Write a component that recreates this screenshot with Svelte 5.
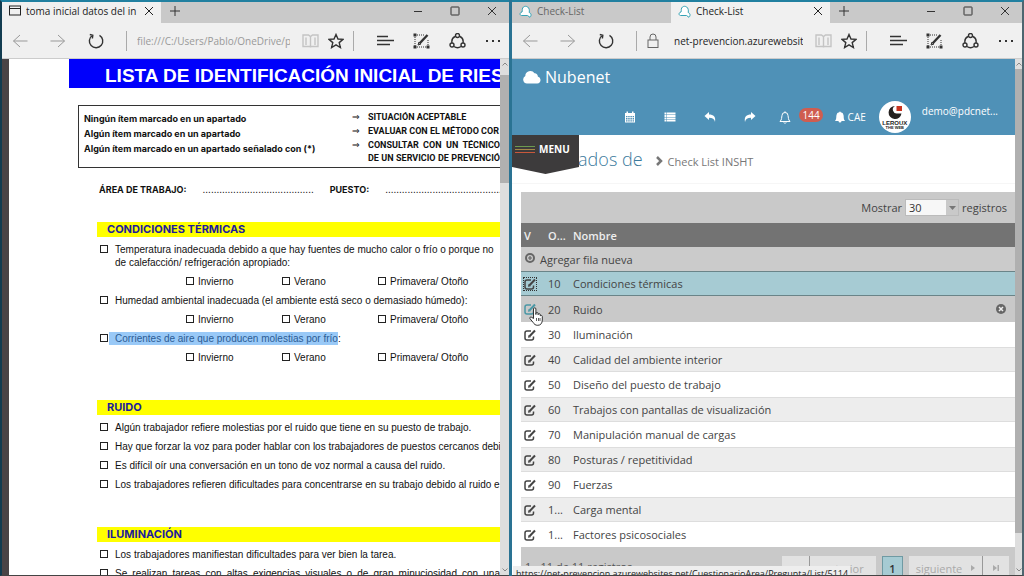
<script>
	let pageSize = $state('30');
	let selected = $state(10);

	const conditions = [
		{
			lines: [
				'Temperatura inadecuada debido a que hay fuentes de mucho calor o frío o porque no',
				'de calefacción/ refrigeración apropiado:'
			]
		},
		{ lines: ['Humedad ambiental inadecuada (el ambiente está seco o demasiado húmedo):'] },
		{ lines: ['Corrientes de aire que producen molestias por frío'], marked: true }
	];
	const seasons = ['Invierno', 'Verano', 'Primavera/ Otoño'];

	const noise = [
		'Algún trabajador refiere molestias por el ruido que tiene en su puesto de trabajo.',
		'Hay que forzar la voz para poder hablar con los trabajadores de puestos cercanos debi',
		'Es difícil oír una conversación en un tono de voz normal a causa del ruido.',
		'Los trabajadores refieren dificultades para concentrarse en su trabajo debido al ruido e'
	];

	const rows = [
		{ order: 10, name: 'Condiciones térmicas' },
		{ order: 20, name: 'Ruido', hover: true },
		{ order: 30, name: 'Iluminación' },
		{ order: 40, name: 'Calidad del ambiente interior' },
		{ order: 50, name: 'Diseño del puesto de trabajo' },
		{ order: 60, name: 'Trabajos con pantallas de visualización' },
		{ order: 70, name: 'Manipulación manual de cargas' },
		{ order: 80, name: 'Posturas / repetitividad' },
		{ order: 90, name: 'Fuerzas' },
		{ order: 100, label: '1...', name: 'Carga mental' },
		{ order: 110, label: '1...', name: 'Factores psicosociales' }
	];
</script>

{#snippet windowControls()}
	<div class="controls">
		<button aria-label="Minimizar"><svg width="10" height="10" viewBox="0 0 10 10"><path d="M1 5.5h8" /></svg></button>
		<button aria-label="Maximizar"><svg width="10" height="10" viewBox="0 0 10 10"><rect x="1" y="1" width="8" height="8" rx="0.5" /></svg></button>
		<button aria-label="Cerrar"><svg width="10" height="10" viewBox="0 0 10 10"><path d="M1 1l8 8M9 1l-8 8" /></svg></button>
	</div>
{/snippet}

{#snippet tabClose()}
	<button class="tab-close" aria-label="Cerrar pestaña"><svg width="10" height="10" viewBox="0 0 10 10"><path d="M1 1l8 8M9 1l-8 8" /></svg></button>
{/snippet}

{#snippet newTab()}
	<button class="new-tab" aria-label="Nueva pestaña"><svg width="12" height="12" viewBox="0 0 12 12"><path d="M6 1v10M1 6h10" /></svg></button>
{/snippet}

{#snippet cloudTab()}
	<svg class="tab-cloud" width="13" height="13" viewBox="0 0 13 13"><path d="M2.500 10.500h6l2.500 1.800c1.500-1.500 1.500-4-.8-4.800.3-1 .2-2.200 0-3.200C9.200.3 3.700.3 3.300 4.300c-.1 1 .2 1.800-.3 2.700-2.300.2-2.700 3.300-.5 3.500z" /></svg>
{/snippet}

{#snippet addressBar(url, secure)}
	<div class="toolbar">
		<div class="nav">
			<button class="dim" aria-label="Atrás"><svg width="16" height="16" viewBox="0 0 16 16"><path d="M8 2L1.500 8 8 14M1.500 8H15.500" /></svg></button>
			<button class="dim" aria-label="Adelante"><svg width="16" height="16" viewBox="0 0 16 16"><path d="M8 2l6.500 6L8 14M14.500 8H0.500" /></svg></button>
			<button aria-label="Actualizar"><svg width="16" height="16" viewBox="0 0 16 16"><path class="bold" d="M4.300 2.500A6.700 6.700 0 1 0 11.500 2.300M1.800 1.500l3 .7-.4 3.300" /></svg></button>
		</div>
		<span class="divider"></span>
		{#if secure}
			<svg class="lock" width="12" height="16" viewBox="0 0 12 16"><rect x="1" y="7" width="10" height="7.500" /><path d="M3 7V4a3 3 0 0 1 6 0v3" /></svg>
		{/if}
		<input class="url" class:dark={secure} type="text" aria-label="Dirección" value={url} />
		<div class="marks">
			<button class="faint" aria-label="Vista de lectura"><svg width="17" height="16" viewBox="0 0 17 16"><path class="bold" d="M1 2h5.500l2 1.500 2-1.500H16v11.500H1zM8.500 3.500v11M4 4.500v7.500M13 4.500v7.500" /></svg></button>
			<button aria-label="Favoritos"><svg width="16" height="16" viewBox="0 0 16 16"><path class="bold" d="M8 1.500l2 4.500 5 .4-3.800 3.200 1.200 4.900L8 11.900l-4.400 2.600 1.200-4.900L1 6.400 6 6z" /></svg></button>
		</div>
		<span class="divider"></span>
		<div class="actions">
			<button aria-label="Centro"><svg width="17" height="16" viewBox="0 0 17 16"><path class="bold" d="M0 3.500h11M0 7.500h17M0 11.500h13" /></svg></button>
			<button aria-label="Nota web"><svg width="17" height="16" viewBox="0 0 17 16"><path class="dots" d="M2 2h9M2 2v12M2 14h13M15 7v7" /><path d="M0.500 0.500h3v3h-3zM0.500 12.500h3v3h-3zM13.500 12.500h3v3h-3z" fill="currentColor" stroke="none" /><path class="pen" d="M6.500 10.500L14.500 2" /><path d="M5 12l1-3 2 2z" /></svg></button>
			<button aria-label="Compartir"><svg width="17" height="16" viewBox="0 0 17 16"><path class="bold" d="M6 3.500C3 5 2.500 7.500 3 10M11 3.500c3 1.500 3.500 4 3 6.500M5 13.500c2 1.500 5 1.500 7 0" /><circle class="bold" cx="8.500" cy="2.500" r="2" /><circle class="bold" cx="3" cy="12" r="2" /><circle class="bold" cx="14" cy="12" r="2" /></svg></button>
			<button aria-label="Más"><svg width="16" height="16" viewBox="0 0 16 16"><path d="M1 7h2v2H1zM7 7h2v2H7zM13 7h2v2h-2z" fill="currentColor" stroke="none" /></svg></button>
		</div>
	</div>
{/snippet}

{#snippet chevron(dir)}
	<svg class="chevron" width="8" height="6" viewBox="0 0 8 6"><path d={dir === 'up' ? 'M1.500 4.500L4 2l2.500 2.500' : 'M1.500 1.500L4 4l2.500-2.500'} /></svg>
{/snippet}

{#snippet checkItem(text)}
	<label class="item"><input type="checkbox" /><span>{text}</span></label>
{/snippet}

<div class="desktop">
	<section class="window left">
		<div class="tabs">
			<div class="tab active">
				<svg width="12" height="12" viewBox="0 0 12 12"><rect x="0.500" y="1" width="11" height="9" /><path d="M0.500 3.500h11" /></svg>
				<span>toma inicial datos del in</span>
				{@render tabClose()}
			</div>
			{@render newTab()}
			{@render windowControls()}
		</div>
		{@render addressBar('file:///C:/Users/Pablo/OneDrive/p', false)}
		<div class="viewport">
			<article class="paper">
				<h1>LISTA DE IDENTIFICACIÓN INICIAL DE RIES</h1>

				<div class="criteria">
					<div class="cases">
						<p>Ningún ítem marcado en un apartado</p>
						<p>Algún ítem marcado en un apartado</p>
						<p>Algún ítem marcado en un apartado señalado con (*)</p>
					</div>
					<ul class="results">
						<li>SITUACIÓN ACEPTABLE</li>
						<li>EVALUAR CON EL MÉTODO COR</li>
						<li class="justified">CONSULTAR CON UN TÉCNICO<br />DE UN SERVICIO DE PREVENCIÓ</li>
					</ul>
				</div>

				<div class="fields">
					<span class="area">ÁREA DE TRABAJO:</span>
					<span>........................................</span>
					<span class="area">PUESTO:</span>
					<span>..........................................</span>
				</div>

				<section class="block">
					<h2>CONDICIONES TÉRMICAS</h2>
					{#each conditions as item}
						<label class="item">
							<input type="checkbox" />
							{#if item.marked}
								<span><mark>{item.lines[0]}</mark>:</span>
							{:else}
								<span>{#each item.lines as line, i}{#if i}<br />{/if}{line}{/each}</span>
							{/if}
						</label>
						<div class="seasons">
							{#each seasons as season}
								<label><input type="checkbox" />{season}</label>
							{/each}
						</div>
					{/each}
				</section>

				<section class="block">
					<h2>RUIDO</h2>
					{#each noise as text}
						{@render checkItem(text)}
					{/each}
				</section>

				<section class="block">
					<h2>ILUMINACIÓN</h2>
					{@render checkItem('Los trabajadores manifiestan dificultades para ver bien la tarea.')}
					<div class="justified">
						{@render checkItem('Se realizan tareas con altas exigencias visuales o de gran minuciosidad con una')}
					</div>
				</section>
			</article>
			<div class="scrollbar">
				{@render chevron('up')}
				<span class="thumb"></span>
				{@render chevron('down')}
			</div>
		</div>
	</section>

	<section class="window right">
		<div class="tabs">
			<div class="tab">{@render cloudTab()}<span>Check-List</span></div>
			<div class="tab active">{@render cloudTab()}<span>Check-List</span>{@render tabClose()}</div>
			{@render newTab()}
			{@render windowControls()}
		</div>
		{@render addressBar('net-prevencion.azurewebsites', true)}
		<div class="viewport">
			<main class="app">
				<header>
					<a class="brand" href="#inicio">
						<svg width="18" height="14" viewBox="0 0 18 14"><path fill="currentColor" d="M4 13.500A4 4 0 0 1 2.300 6 5 5 0 0 1 11.500 3.300 3 3 0 0 1 14.800 6.600 3.500 3.500 0 0 1 14.300 13.500z" /></svg>
						Nubenet
					</a>
					<nav>
						<a href="#calendario" aria-label="Calendario"><svg width="12" height="12" viewBox="0 0 12 12"><path fill="currentColor" fill-rule="evenodd" d="M1 2h1.500V.5h1.500V2h4V.5h1.500V2H11v9.500H1zM2 5v1.300h1.500V5zm2.200 0v1.300h1.500V5zm2.200 0v1.300h1.500V5zm2.200 0v1.300H10V5zM2 7.100v1.300h1.500V7.100zm2.200 0v1.300h1.500V7.100zm2.200 0v1.300h1.500V7.100zm2.200 0v1.300H10V7.100zM2 9.200v1.300h1.500V9.200zm2.200 0v1.300h1.500V9.200zm2.200 0v1.300h1.500V9.200zm2.200 0v1.300H10V9.200z" /></svg></a>
						<a href="#lista" aria-label="Lista"><svg width="12" height="12" viewBox="0 0 12 12"><path fill="currentColor" d="M.5 1.500h2v2h-2zM3 1.500h8.500v2H3zM.5 4h2v2h-2zM3 4h8.500v2H3zM.5 6.500h2v2h-2zM3 6.500h8.500v2H3zM.5 9h2v1.500h-2zM3 9h8.500v1.500H3z" /></svg></a>
						<a href="#volver" aria-label="Volver"><svg width="12" height="12" viewBox="0 0 12 12"><path fill="currentColor" d="M.5 5L5 1v2.500c4.500 0 7 2 6 7.500C10.500 8 8.500 6.800 5 6.800V9z" /></svg></a>
						<a href="#enviar" aria-label="Enviar"><svg width="12" height="12" viewBox="0 0 12 12"><path fill="currentColor" d="M11.500 5L7 1v2.500C2.500 3.500 0 5.500 1 11c.5-3 2.500-4.200 6-4.200V9z" /></svg></a>
						<a class="alerts" href="#avisos" aria-label="Avisos">
							<svg width="12" height="13" viewBox="0 0 12 13"><path fill="none" stroke="currentColor" d="M1 10.500c2-2 1.500-4 2-6a3 3 0 0 1 6 0c.5 2 0 4 2 6zM6 .3v1.200M4.800 11.500c.5 1 1.900 1 2.400 0" /></svg>
							<span class="badge">144</span>
						</a>
						<a class="cae" href="#cae"><svg width="10" height="12" viewBox="0 0 10 12"><path fill="currentColor" d="M0 10c1.800-2 1-4 1.500-6A3.300 3.300 0 0 1 4.300 1.200a.7.700 0 0 1 1.400 0A3.300 3.300 0 0 1 8.500 4c.5 2-.3 4 1.500 6H6.500a1.500 1.500 0 0 1-3 0z" /></svg>CAE</a>
						<a class="user" href="#perfil">
							<span class="avatar">
								<svg width="16" height="15" viewBox="0 0 16 15"><path d="M8 1A6.500 6.500 0 1 0 14.500 8.500H10.500A4 4 0 0 1 8 1z" fill="#25211f" /><path d="M9.500 1H15v5H9.500z" fill="#c8341f" /></svg>
								<b>LEROUX</b>
								<i>THE WEB</i>
							</span>
							<span class="mail">demo@pdcnet...</span>
						</a>
					</nav>
				</header>

				<div class="heading">
					<button class="menu"><svg width="20" height="9" viewBox="0 0 20 9"><path stroke="#6c9a4f" d="M0 1.500h20" /><path stroke="#a58a4a" d="M0 4.500h20" /><path stroke="#c9583b" d="M0 7.500h20" /></svg>MENU</button>
					<h2>Apartados de</h2>
					<p><svg width="9" height="10" viewBox="0 0 9 10"><path fill="none" stroke="currentColor" stroke-width="2.500" d="M2 1l4 4-4 4" /></svg>Check List INSHT</p>
				</div>

				<div class="grid">
					<div class="grid-tools">
						<label for="page-size">Mostrar</label>
						<span class="picker">
							<select id="page-size" bind:value={pageSize}>
								<option>10</option>
								<option>30</option>
								<option>50</option>
							</select>
							<svg width="7" height="4" viewBox="0 0 7 4"><path fill="currentColor" d="M0 0h7L3.500 4z" /></svg>
						</span>
						<span>registros</span>
					</div>
					<table>
						<colgroup><col class="c-edit" /><col class="c-order" /><col /><col class="c-remove" /></colgroup>
						<thead>
							<tr><th>V</th><th>O...</th><th>Nombre</th><th></th></tr>
						</thead>
						<tbody>
							<tr class="add">
								<td colspan="4">
									<button><svg width="10" height="10" viewBox="0 0 10 10"><circle cx="5" cy="5" r="4" fill="none" stroke="currentColor" stroke-width="2" /><path stroke="currentColor" stroke-width="1.200" d="M5 3v4M3 5h4" /></svg>Agregar fila nueva</button>
								</td>
							</tr>
							{#each rows as row}
								<tr class:selected={row.order === selected} class:hover={row.hover}>
									<td>
										<button class="edit" aria-label="Editar {row.name}" onclick={() => (selected = row.order)}>
											<svg width="12" height="12" viewBox="0 0 12 12"><path fill="none" stroke="currentColor" stroke-width="1.500" d="M7 2H3Q1 2 1 4v5q0 2 2 2h4.500q2 0 2-2V7.500" /><path fill="none" stroke="currentColor" stroke-width="2" d="M5.500 7.300L11 1.500" /><path fill="currentColor" d="M4 8.800l.5-2.800 2.300 2.300z" /></svg>
										</button>
									</td>
									<td>{row.label ?? row.order}</td>
									<td>{row.name}</td>
									<td>
										{#if row.hover}
											<button class="remove" aria-label="Quitar {row.name}"><svg width="10" height="10" viewBox="0 0 10 10"><circle cx="5" cy="5" r="5" fill="currentColor" /><path stroke="#eee" stroke-width="1.500" d="M3 3l4 4M7 3L3 7" /></svg></button>
										{/if}
									</td>
								</tr>
							{/each}
						</tbody>
					</table>
					<div class="pager">
						<span class="count">1 - 11 de 11 registros</span>
						<button class="edge" aria-label="Primera página"></button>
						<button class="prev">anterior</button>
						<button class="current">1</button>
						<button class="next">siguiente <svg width="4" height="6" viewBox="0 0 4 6"><path fill="currentColor" d="M0 0l4 3-4 3z" /></svg></button>
						<button class="edge" aria-label="Última página"><svg width="6" height="6" viewBox="0 0 6 6"><path fill="currentColor" d="M0 0l4 3-4 3zM4.500 0H6v6H4.500z" /></svg></button>
					</div>
				</div>

				<svg class="pointer" width="14" height="19" viewBox="0 0 14 19"><path fill="#fff" stroke="#333" d="M4.500 11.500V2a1.200 1.200 0 0 1 2.400 0v5.500-1a1.100 1.100 0 0 1 2.200.2v1a1.100 1.100 0 0 1 2.200.2v1a1.100 1.100 0 0 1 2 .5V13c0 3-1.500 5.300-4.500 5.300-2.500 0-3.500-1-4.800-3L1 11.700c-.7-1.300.8-2.300 1.800-1.300z" /><path stroke="#333" stroke-width="0.800" d="M7.500 11v3M9.500 11v3M11 11v3" /></svg>
			</main>
			<div class="scrollbar">
				{@render chevron('up')}
				<span class="thumb"></span>
				{@render chevron('down')}
			</div>
			<div class="status">https://net-prevencion.azurewebsites.net/CuestionarioArea/Pregunta/List/5114</div>
		</div>
	</section>
</div>

<style>
	:global(body) {
		margin: 0;
	}

	.desktop {
		display: grid;
		grid-template-columns: 1fr 1fr;
		height: 100vh;
		overflow: hidden;
		box-sizing: border-box;
		background: #2a7393;
		font-family: 'Open Sans', 'Noto Sans', sans-serif;
		font-size: 11px;
		color: #333;
	}

	button {
		display: flex;
		align-items: center;
		padding: 0;
		border: 0;
		background: none;
		font: inherit;
		color: inherit;
	}

	a {
		color: inherit;
		text-decoration: none;
	}

	h1,
	h2,
	p,
	ul {
		margin: 0;
		padding: 0;
	}

	svg {
		display: block;
		flex: none;
	}

	/* browser windows */
	.window {
		display: flex;
		flex-direction: column;
		min-width: 0;
		min-height: 0;
		border-top: 2px solid #2180a0;
		border-bottom: 1px solid #444;
		background: #f0f0f0;
	}

	.left {
		border-left: 2px solid #123c50;
		margin-right: 3px;
	}

	.right {
		border-right: 2px solid #4d6670;
	}

	.tabs {
		display: flex;
		height: 21px;
		background: #c9c9c9;
	}

	.tabs svg,
	.toolbar svg {
		fill: none;
		stroke: currentColor;
	}

	.tab {
		display: flex;
		align-items: center;
		flex: 0 1 159px;
		box-sizing: border-box;
		gap: 5px;
		min-width: 0;
		padding: 0 7px 3px 7px;
		font-size: 10px;
		white-space: nowrap;
		color: #666;
	}

	.tab.active {
		background: #f0f0f0;
		color: #222;
	}

	.tab span {
		flex: 1;
		overflow: hidden;
	}

	.tabs .tab-cloud {
		fill: #fff;
		stroke: #35a3b5;
	}

	.new-tab {
		padding: 0 0 3px 8px;
	}

	.controls {
		display: flex;
		gap: 27px;
		margin-left: auto;
		padding: 0 12px 4px 0;
	}

	.toolbar {
		display: flex;
		align-items: center;
		height: 35px;
		padding: 0 8px 0 10px;
		border-bottom: 1px solid #ccc;
	}

	.nav,
	.marks,
	.actions {
		display: flex;
	}

	.nav {
		gap: 22px;
	}

	.marks {
		gap: 9px;
	}

	.actions {
		gap: 19px;
	}

	.dim {
		color: #999;
	}

	.faint {
		color: #c4c4c4;
	}

	.bold {
		stroke-width: 1.4;
	}

	.dots {
		stroke-dasharray: 1 1;
	}

	.pen {
		stroke-width: 2.4;
	}

	.divider {
		width: 1px;
		height: 20px;
		margin: 0 10px 0 22px;
		background: #aaa;
	}

	.marks + .divider {
		margin: 0 23px 0 9px;
	}

	.lock {
		margin-right: 15px;
		color: #666;
	}

	.url {
		flex: 1;
		min-width: 0;
		margin-right: 12px;
		padding: 0;
		border: 0;
		background: none;
		font: inherit;
		font-size: 10px;
		color: #999;
		outline: 0;
	}

	.url.dark {
		color: #222;
	}

	.viewport {
		position: relative;
		display: flex;
		flex: 1;
		min-height: 0;
		overflow: hidden;
	}

	.scrollbar {
		display: flex;
		flex-direction: column;
		align-items: center;
		flex: none;
		width: 9px;
		background: #dedede;
	}

	.right .scrollbar {
		width: 7px;
	}

	.chevron {
		margin: 2px 0;
		fill: none;
		stroke: #888;
	}

	.thumb {
		width: 100%;
		height: 21%;
		margin: 6px 0 auto;
		background: #b0b0b0;
	}

	.right .thumb {
		height: 90%;
		margin-top: 0;
	}

	/* printed checklist */
	.paper {
		flex: 1;
		min-width: 0;
		overflow: hidden;
		border-left: 7px solid #4a4446;
		background: #fff;
		font-family: 'Liberation Sans', Arial, sans-serif;
		font-size: 10px;
		line-height: 13px;
		white-space: nowrap;
		color: #111;
	}

	.paper h1 {
		margin-left: 60px;
		padding: 4px 0 0 36px;
		background: #0000fb;
		font-size: 19px;
		line-height: 25px;
		color: #fff;
	}

	.criteria {
		display: flex;
		height: 63px;
		margin: 17px 0 0 69px;
		box-sizing: border-box;
		padding: 5px 0 0 5px;
		border: 1px solid #333;
		border-right: 0;
		font-size: 9px;
		font-weight: bold;
	}

	.cases {
		width: 268px;
		flex: none;
		font-family: Inter, sans-serif;
		line-height: 15px;
	}

	.results {
		flex: 1;
		min-width: 0;
		list-style: none;
		font-family: Roboto, sans-serif;
	}

	.results li {
		position: relative;
		padding-left: 16px;
		margin-bottom: 1px;
	}

	.results li::before {
		content: '⇒';
		position: absolute;
		left: 0;
		font-family: 'DejaVu Sans', sans-serif;
		font-weight: normal;
	}

	.fields {
		display: flex;
		gap: 16px;
		margin: 15px 0 26px 90px;
	}

	.area {
		font-family: Inter, sans-serif;
		font-size: 9px;
		font-weight: bold;
	}

	.block {
		margin: 0 0 36px 88px;
	}

	.block h2 {
		padding-left: 10px;
		background: #ff0;
		font-family: Inter, sans-serif;
		font-size: 11px;
		line-height: 15px;
		color: #1c1c9c;
	}

	.item {
		display: flex;
		gap: 7px;
		margin-top: 6px;
		padding-left: 3px;
	}

	.item span {
		flex: 1;
		min-width: 0;
	}

	.justified {
		text-align-last: justify;
	}

	.paper input {
		appearance: none;
		flex: none;
		width: 8px;
		height: 8px;
		margin: 2px 0 0;
		box-sizing: border-box;
		border: 1px solid #222;
		background: #fff;
	}

	mark {
		margin-left: -6px;
		padding: 1px 0 1px 6px;
		background: #99c9f7;
		color: #2c5c94;
	}

	.seasons {
		display: grid;
		grid-template-columns: 96px 96px auto;
		margin: 6px 0 0 89px;
	}

	.seasons label {
		display: flex;
		gap: 4px;
	}

	/* web application */
	.app {
		position: relative;
		display: flex;
		flex-direction: column;
		flex: 1;
		min-width: 0;
		background: #fff;
	}

	header {
		flex: none;
		background: #4f91b7;
		color: #fff;
	}

	.brand {
		display: flex;
		align-items: center;
		gap: 4px;
		height: 36px;
		padding-left: 11px;
		font-size: 16px;
	}

	nav {
		display: flex;
		align-items: center;
		justify-content: flex-end;
		gap: 28px;
		height: 36px;
		padding: 4px 17px 0 0;
	}

	.alerts,
	.cae,
	.user {
		display: flex;
		align-items: center;
	}

	.alerts {
		gap: 8px;
		margin-left: -5px;
	}

	.badge {
		margin-bottom: 4px;
		padding: 0 3px;
		border-radius: 7px;
		background: #cf5d50;
		font-size: 10px;
		line-height: 14px;
	}

	.cae {
		gap: 3px;
		margin-left: -16px;
		font-size: 10px;
	}

	.user {
		gap: 11px;
		margin-left: -15px;
	}

	.avatar {
		display: flex;
		flex-direction: column;
		align-items: center;
		width: 32px;
		height: 28px;
		padding-top: 4px;
		border-radius: 50%;
		background: #fff;
		font-family: 'Liberation Sans', Arial, sans-serif;
		font-size: 6px;
		line-height: 6px;
		color: #222;
	}

	.avatar i {
		font-size: 4px;
		line-height: 4px;
		font-style: normal;
		font-weight: bold;
	}

	.mail {
		margin-bottom: 12px;
		font-size: 10px;
	}

	.heading {
		position: relative;
		display: flex;
		align-items: center;
		gap: 12px;
		flex: none;
		height: 48px;
		padding-left: 22px;
		border-bottom: 1px solid #f6f6f6;
	}

	.heading h2 {
		font-size: 18px;
		font-weight: 300;
		color: #3b7a9c;
	}

	.heading p {
		display: flex;
		align-items: center;
		gap: 4px;
		padding-top: 4px;
		color: #777;
	}

	.menu {
		position: absolute;
		top: 0;
		left: 0;
		gap: 4px;
		box-sizing: border-box;
		width: 67px;
		height: 39px;
		padding: 0 0 11px 3px;
		background: #3d3b3c;
		clip-path: polygon(0 0, 100% 0, 100% 82%, 50% 100%, 0 82%);
		font-size: 10px;
		font-weight: bold;
		color: #fff;
	}

	.grid {
		flex: none;
		margin: 8px 0 0 9px;
		background: #c9c9c9;
		color: #444;
	}

	.grid-tools {
		display: flex;
		align-items: center;
		justify-content: flex-end;
		gap: 3px;
		height: 31px;
		padding-right: 8px;
	}

	.picker {
		position: relative;
		display: flex;
		align-items: center;
	}

	.picker svg {
		position: absolute;
		right: 3px;
		pointer-events: none;
		color: #777;
	}

	select {
		appearance: none;
		width: 54px;
		height: 17px;
		padding: 0 3px;
		border: 1px solid #bbb;
		border-radius: 0;
		background: linear-gradient(90deg, #f7f7f7 40px, #c9c9c9 40px);
		font: inherit;
		color: #333;
	}

	table {
		width: 100%;
		table-layout: fixed;
		border-collapse: collapse;
	}

	.c-edit {
		width: 24px;
	}

	.c-order {
		width: 25px;
	}

	.c-remove {
		width: 22px;
	}

	th,
	td {
		height: 25px;
		box-sizing: border-box;
		padding: 0 0 0 3px;
		text-align: left;
		white-space: nowrap;
	}

	thead th,
	.add td {
		height: 24px;
	}

	thead th {
		background: #737373;
		font-weight: 600;
		color: #eee;
	}

	tbody tr:nth-child(odd) {
		background: #ededed;
		box-shadow: inset 0 1px #ddd, inset 0 -1px #ddd;
	}

	tbody tr:nth-child(even) {
		background: #fff;
	}

	tbody tr.add {
		background: #cbcbcb;
		box-shadow: none;
	}

	.add button {
		gap: 5px;
		padding-left: 1px;
	}

	.add svg {
		margin-bottom: 3px;
		color: #666;
	}

	tbody tr.selected {
		background: #a6cbd3;
		box-shadow: inset 0 1px #6a8488, inset 0 -1px #6a8488;
	}

	tbody tr.hover {
		background: #c9c9c9;
		box-shadow: none;
	}

	.hover td {
		height: 26px;
	}

	.selected .edit {
		outline: 1px dotted #333;
	}

	.hover .edit {
		color: #4a97a5;
	}

	.remove {
		color: #666;
	}

	.pager {
		display: flex;
		height: 40px;
		padding: 9px 6px 0 4px;
		color: #aaa;
	}

	.pager button {
		justify-content: center;
		height: 24px;
		background: #e2e2e2;
	}

	.count {
		flex: 1;
		padding-top: 3px;
		color: #555;
	}

	.pager .edge {
		width: 27px;
	}

	.pager .prev {
		width: 67px;
		border-left: 1px solid #999;
	}

	.pager .next {
		gap: 9px;
		width: 73px;
	}

	.pager .next + .edge {
		border-left: 1px solid #999;
	}

	.pager .current {
		width: 21px;
		margin: 0 6px;
		border: 1px solid #6f9aa3;
		background: #a6cbd3;
		font-weight: 600;
		color: #333;
	}

	.pointer {
		position: absolute;
		top: 248px;
		left: 17px;
	}

	.status {
		position: absolute;
		left: 1px;
		bottom: 0;
		height: 9px;
		padding: 0 2px 0 3px;
		overflow: hidden;
		background: #eee;
		font-size: 9px;
		line-height: 15px;
		color: #222;
	}
</style>
